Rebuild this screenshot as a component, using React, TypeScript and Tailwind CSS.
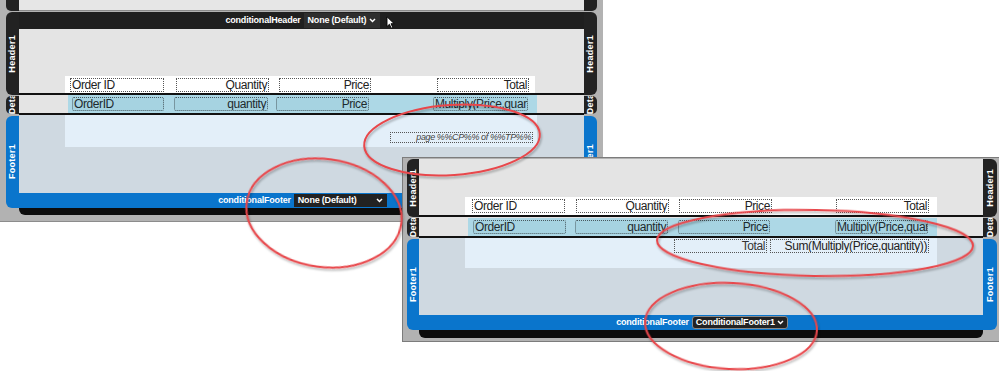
import React from "react";

const FONT = "font-['Liberation_Sans',Arial,sans-serif]";

function VText({ children }: { children: React.ReactNode }) {
  return (
    <span className="[writing-mode:vertical-rl] rotate-180 whitespace-nowrap text-[9px] font-bold leading-none text-white tracking-[0.3px]">
      {children}
    </span>
  );
}

function Chevron() {
  return (
    <svg width="7" height="5" viewBox="0 0 7 5" className="shrink-0">
      <path d="M1 1 L3.5 3.6 L6 1" fill="none" stroke="white" strokeWidth="1.4" />
    </svg>
  );
}

function Select({ text, className }: { text: string; className: string }) {
  return (
    <div className={`flex items-center justify-between text-white text-[9px] font-bold leading-none tracking-[-0.2px] ${className}`}>
      <span>{text}</span>
      <Chevron />
    </div>
  );
}

function Label({ text }: { text: string }) {
  return <span className="text-white text-[9px] font-bold leading-none tracking-[-0.2px]">{text}</span>;
}

function HField({ text, className }: { text: string; className: string }) {
  return (
    <div
      className={`h-[14px] border border-dotted border-[#555] flex items-center overflow-hidden whitespace-nowrap px-[1px] text-[12px] leading-none tracking-[-0.4px] text-[#222] ${className}`}
    >
      {text}
    </div>
  );
}

function DField({ text, className }: { text: string; className: string }) {
  return (
    <div
      className={`h-[14px] border border-dotted border-[#4a5a60] rounded-[2px] bg-[#a6d3e1] flex items-center overflow-hidden whitespace-nowrap px-[1px] text-[12px] leading-none tracking-[-0.4px] text-[#1d2a2e] ${className}`}
    >
      {text}
    </div>
  );
}

function HeaderRow() {
  return (
    <div className="h-[17px] ml-[46px] w-[470px] bg-white flex items-center">
      <HField text="Order ID" className="ml-[5px] w-[94px]" />
      <HField text="Quantity" className="ml-[12px] w-[93px] justify-end" />
      <HField text="Price" className="ml-[10px] w-[92px] justify-end" />
      <HField text="Total" className="ml-[66px] w-[92px] justify-end" />
    </div>
  );
}

function DetailRow() {
  return (
    <div className="ml-[49px] w-[469px] bg-[#add8e6] flex items-center">
      <DField text="OrderID" className="ml-[4px] w-[92px]" />
      <DField text="quantity" className="ml-[10px] w-[94px] justify-end" />
      <DField text="Price" className="ml-[8px] w-[93px] justify-end" />
      <DField text="Multiply(Price,quantity)" className="ml-[64px] w-[95px]" />
    </div>
  );
}

function Shot1() {
  return (
    <div className={`absolute left-0 top-0 w-[603px] h-[222px] bg-[#b2b2b2] px-[6px] flex flex-col border-b border-[#8c8c8c] ${FONT}`}>
      {/* previous section */}
      <div className="h-[11px] flex shrink-0">
        <div className="w-[13px] bg-[#222] rounded-bl-[5px]" />
        <div className="flex-1 bg-[#e6e6e6] border-b border-[#8a8a8a]" />
        <div className="w-[13px] bg-[#222] rounded-br-[5px]" />
      </div>
      {/* header */}
      <div className="h-[83px] flex mt-[1px] shrink-0">
        <div className="w-[13px] bg-[#222] rounded-l-[6px] flex items-center justify-center">
          <VText>Header1</VText>
        </div>
        <div className="flex-1 flex flex-col">
          <div className="h-[17px] bg-[#1f1f1f] flex items-center justify-center gap-[3px] pl-[2px]">
            <Label text="conditionalHeader" />
            <Select text="None (Default)" className="h-[15px] w-[76px] bg-[#2e2e2e] px-[4px]" />
          </div>
          <div className="flex-1 bg-[#e4e4e4] border-b-2 border-[#111] flex flex-col justify-end">
            <HeaderRow />
          </div>
        </div>
        <div className="w-[13px] bg-[#222] rounded-r-[6px] flex items-center justify-center">
          <VText>Header1</VText>
        </div>
      </div>
      {/* detail */}
      <div className="h-[20px] flex shrink-0">
        <div className="w-[13px] bg-[#222] rounded-l-[5px] my-[1px] flex flex-col items-center justify-end overflow-hidden">
          <VText>Detail</VText>
        </div>
        <div className="flex-1 bg-[#e4e4e4] border-b-2 border-[#111] flex">
          <DetailRow />
        </div>
        <div className="w-[13px] bg-[#222] rounded-r-[5px] my-[1px] flex flex-col items-center justify-end overflow-hidden">
          <VText>Detail</VText>
        </div>
      </div>
      {/* footer */}
      <div className="h-[93px] flex shrink-0">
        <div className="w-[13px] bg-[#0a75cc] rounded-l-[6px] mt-[1px] flex items-center justify-center">
          <VText>Footer1</VText>
        </div>
        <div className="flex-1 flex flex-col">
          <div className="flex-1 bg-[#cfd9e1]">
            <div className="h-[32px] ml-[46px] w-[472px] bg-[#e3eff9] flex flex-col">
              <div className="mt-[17px] ml-[325px] w-[143px] h-[11px] border border-dotted border-[#555] flex items-center justify-end pr-[1px] italic text-[9px] leading-none tracking-[-0.4px] text-[#444] whitespace-nowrap overflow-hidden">
                page %%CP%% of %%TP%%
              </div>
            </div>
          </div>
          <div className="h-[15px] bg-[#0a75cc] flex items-center justify-center gap-[3px] pl-[2px]">
            <Label text="conditionalFooter" />
            <Select text="None (Default)" className="h-[13px] w-[93px] bg-[#222] px-[4px]" />
          </div>
        </div>
        <div className="w-[13px] bg-[#0a75cc] rounded-r-[6px] mt-[1px] flex items-center justify-center">
          <VText>Footer1</VText>
        </div>
      </div>
      <div className="h-[7px] mx-[13px] bg-[#0c0c0c] rounded-b-[6px] shrink-0" />
    </div>
  );
}

function Shot2() {
  return (
    <div className={`absolute left-[402px] top-[157px] w-[600px] h-[185px] bg-[#b2b2b2] border border-[#7c7c7c] pl-[4px] pt-[1px] flex flex-col ${FONT}`}>
      {/* header */}
      <div className="h-[58px] flex shrink-0">
        <div className="w-[12px] bg-[#222] rounded-l-[6px] flex items-center justify-center overflow-hidden">
          <VText>Header1</VText>
        </div>
        <div className="w-[564px] bg-[#e4e4e4] border-b-2 border-[#111] flex flex-col justify-end">
          <div className="h-[18px] ml-[46px] w-[472px] bg-white flex items-center">
            <HField text="Order ID" className="ml-[7px] w-[93px]" />
            <HField text="Quantity" className="ml-[11px] w-[93px] justify-end" />
            <HField text="Price" className="ml-[10px] w-[93px] justify-end" />
            <HField text="Total" className="ml-[64px] w-[93px] justify-end" />
          </div>
        </div>
        <div className="w-[14px] bg-[#222] rounded-r-[6px] flex items-center justify-center">
          <VText>Header1</VText>
        </div>
      </div>
      {/* detail */}
      <div className="h-[21px] flex shrink-0">
        <div className="w-[12px] bg-[#222] rounded-l-[5px] my-[1px] flex flex-col items-center justify-end overflow-hidden">
          <VText>Detail</VText>
        </div>
        <div className="w-[564px] bg-[#e4e4e4] border-b-2 border-[#111] flex pt-[1px]">
          <div className="ml-[49px] w-[469px] bg-[#add8e6] flex items-center">
            <DField text="OrderID" className="ml-[5px] w-[93px]" />
            <DField text="quantity" className="ml-[9px] w-[93px] justify-end" />
            <DField text="Price" className="ml-[10px] w-[92px] justify-end" />
            <DField text="Multiply(Price,quantity)" className="ml-[65px] w-[93px]" />
          </div>
        </div>
        <div className="w-[14px] bg-[#222] rounded-r-[5px] my-[1px] flex flex-col items-center justify-end overflow-hidden">
          <VText>Detail</VText>
        </div>
      </div>
      {/* footer */}
      <div className="h-[92px] flex shrink-0">
        <div className="w-[12px] bg-[#0a75cc] rounded-l-[6px] mt-[1px] flex items-center justify-center">
          <VText>Footer1</VText>
        </div>
        <div className="w-[564px] flex flex-col">
          <div className="flex-1 bg-[#cfd9e1]">
            <div className="h-[30px] ml-[46px] w-[472px] bg-[#e3eff9] flex items-start pt-[1px]">
              <HField text="Total" className="ml-[209px] w-[93px] justify-end !text-[#333]" />
              <HField text="Sum(Multiply(Price,quantity))" className="ml-[3px] w-[159px] justify-end" />
            </div>
          </div>
          <div className="h-[15px] bg-[#0a75cc] flex items-center justify-center gap-[3px] pl-[2px]">
            <Label text="conditionalFooter" />
            <Select text="ConditionalFooter1" className="h-[13px] w-[96px] bg-[#222] border border-[#8a8a8a] rounded-[3px] px-[3px]" />
          </div>
        </div>
        <div className="w-[14px] bg-[#0a75cc] rounded-r-[6px] mt-[1px] flex items-center justify-center">
          <VText>Footer1</VText>
        </div>
      </div>
      <div className="h-[8px] ml-[12px] w-[564px] bg-[#0c0c0c] rounded-b-[6px] shrink-0" />
    </div>
  );
}

export default function App() {
  return (
    <div className="relative w-[999px] h-[371px] overflow-hidden bg-white">
      <Shot1 />
      <Shot2 />
      {/* cursor */}
      <svg className="absolute left-[386px] top-[16px]" width="10" height="13" viewBox="0 0 10 13">
        <path d="M1 0.8 L1 10.5 L3.4 8.3 L5.2 12.2 L6.8 11.5 L5 7.7 L8.2 7.7 Z" fill="white" stroke="black" strokeWidth="0.9" />
      </svg>
      {/* annotations */}
      <svg className="absolute left-0 top-0 pointer-events-none" width="999" height="371" viewBox="0 0 999 371">
        <defs>
          <filter id="sh" x="-10%" y="-10%" width="120%" height="130%">
            <feDropShadow dx="1" dy="2" stdDeviation="1.2" floodColor="#000" floodOpacity="0.3" />
          </filter>
        </defs>
        <g fill="none" stroke="#e8474b" strokeWidth="2" filter="url(#sh)">
          <ellipse cx="452" cy="140" rx="88" ry="35" transform="rotate(-4 452 140)" />
          <ellipse cx="324" cy="213" rx="78" ry="54" transform="rotate(8 324 213)" />
          <ellipse cx="815" cy="243" rx="158" ry="33" transform="rotate(1 815 243)" />
          <ellipse cx="731" cy="326" rx="86" ry="43" transform="rotate(3 731 326)" />
        </g>
      </svg>
    </div>
  );
}
